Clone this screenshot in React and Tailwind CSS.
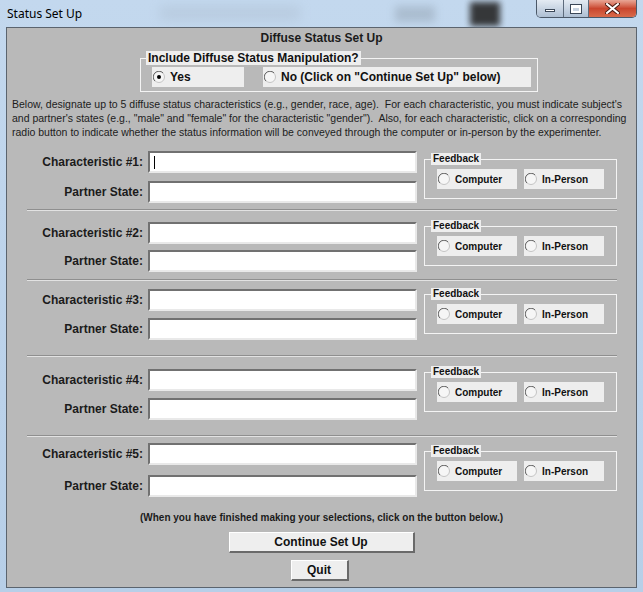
import React from 'react';

// per-group vertical offsets (GridBag spacing in the original is uneven)
const groups = [
  { n: 1, row1: 'mt-[12px]', row2: 'mt-[8px]', fb: 'mt-[14px]', sep: 'mt-[6px]', caret: true },
  { n: 2, row1: 'mt-[11px]', row2: 'mt-[6px]', fb: 'mt-[9px]', sep: 'mt-[7px]' },
  { n: 3, row1: 'mt-[8px]', row2: 'mt-[7px]', fb: 'mt-[7px]', sep: 'mt-[15px]' },
  { n: 4, row1: 'mt-[12px]', row2: 'mt-[7px]', fb: 'mt-[9px]', sep: 'mt-[15px]' },
  { n: 5, row1: 'mt-[6px]', row2: 'mt-[10px]', fb: 'mt-[8px]' },
];

function Radio({ checked }) {
  return (
    <svg width="12" height="12" viewBox="0 0 12 12" className="shrink-0">
      <circle cx="6" cy="6" r="5.5" fill="#f6f6f6" stroke="#c4c4c4" />
      <path d="M1.9 10.1 A5.5 5.5 0 0 1 10.1 1.9" fill="none" stroke="#6c6c6c" />
      {checked && <circle cx="6" cy="6" r="2" fill="#000" />}
    </svg>
  );
}

function TextField({ caret }) {
  return (
    <div className="w-[269px] h-[22px] bg-white border-t-2 border-l-2 border-t-[#717171] border-l-[#717171] border-b-2 border-r-2 border-b-[#e9e9e9] border-r-[#e9e9e9] flex items-center">
      {caret && <span className="ml-[4px] w-px h-[13px] bg-black" />}
    </div>
  );
}

function FieldRow({ label, caret, className }) {
  return (
    <div className={`flex items-center ${className}`}>
      <span className="w-[136px] text-right text-[12px] font-bold text-[#1b1b1b] leading-[14px]">{label}</span>
      <div className="ml-[5px]">
        <TextField caret={caret} />
      </div>
    </div>
  );
}

function Feedback({ className }) {
  return (
    <div className={`flex flex-col ml-[7px] w-[193px] ${className}`}>
      <span className="relative z-10 self-start ml-[7px] px-[2px] h-[12px] leading-[12px] bg-[#eeeeee] text-[10px] font-bold text-[#111]">
        Feedback
      </span>
      <div className="-mt-[6px] h-[40px] border border-[#f4f4f4] flex items-start pt-[9px] pl-[12px] gap-[7px]">
        <div className="w-[80px] h-[20px] bg-[#eeeeee] flex items-center pl-[1px] gap-[5px]">
          <Radio />
          <span className="text-[10px] font-bold text-[#111]">Computer</span>
        </div>
        <div className="w-[80px] h-[20px] bg-[#eeeeee] flex items-center pl-[1px] gap-[5px]">
          <Radio />
          <span className="text-[10px] font-bold text-[#111]">In-Person</span>
        </div>
      </div>
    </div>
  );
}

function WindowButtons() {
  return (
    <div className="ml-auto mr-[6px] flex h-[18px] rounded-b-[5px] border border-t-0 border-[#4b5868] overflow-hidden">
      <div className="w-[27px] h-full bg-gradient-to-b from-[#e4ebf3] to-[#aebfd3] border-r border-[#5d6b7c] flex items-center justify-center">
        <span className="mt-[4px] w-[10px] h-[3px] bg-white border border-[#3c4858]" />
      </div>
      <div className="w-[25px] h-full bg-gradient-to-b from-[#e4ebf3] to-[#aebfd3] border-r border-[#5d6b7c] flex items-center justify-center">
        <span className="w-[10px] h-[8px] bg-[#c8d3e0] border-2 border-t-[3px] border-white outline outline-1 outline-[#3c4858]" />
      </div>
      <div className="w-[47px] h-full bg-gradient-to-b from-[#e8a696] via-[#c9452e] to-[#d96a4a] flex items-center justify-center">
        <svg width="15" height="11" viewBox="0 0 15 11">
          <path d="M2 1 L13 10 M13 1 L2 10" stroke="#4a1a12" strokeWidth="4" strokeLinecap="square" />
          <path d="M2 1 L13 10 M13 1 L2 10" stroke="#ffffff" strokeWidth="2" strokeLinecap="square" />
        </svg>
      </div>
    </div>
  );
}

export default function App() {
  return (
    <div className="relative w-[643px] h-[592px] overflow-hidden bg-gradient-to-b from-[#c3d8ee] to-[#b7cfe8] flex flex-col font-['Liberation_Sans',Arial,sans-serif]">
      {/* blurred desktop showing through the aero frame */}
      <div className="absolute left-[470px] top-[2px] w-[30px] h-[24px] bg-[#262626] blur-[3px] opacity-90" />
      <div className="absolute left-[395px] top-[6px] w-[40px] h-[16px] bg-[#7f8c99] blur-[4px] opacity-35" />
      <div className="absolute left-[160px] top-[6px] w-[140px] h-[14px] bg-[#9aa7b5] blur-[6px] opacity-25" />

      <div className="relative h-[27px] flex items-start">
        <span className="ml-[7px] mt-[6px] text-[12px] leading-[15px] text-black font-['Noto_Sans',sans-serif]">Status Set Up</span>
        <WindowButtons />
      </div>

      <div className="relative mx-[6px] w-[631px] h-[561px] border border-[#5b646e] bg-[#b9b9b9] flex flex-col">
        <div className="mt-[3px] h-[14px] leading-[14px] text-center text-[12px] font-bold text-[#1b1b1b]">
          Diffuse Status Set Up
        </div>

        <div className="mt-[6px] ml-[133px] w-[398px] flex flex-col">
          <span className="relative z-10 self-start ml-[6px] px-[2px] h-[14px] leading-[14px] bg-[#eeeeee] text-[12px] font-bold text-[#111]">
            Include Diffuse Status Manipulation?
          </span>
          <div className="-mt-[7px] h-[34px] border border-[#f4f4f4] flex items-start pt-[8px] pl-[11px] gap-[19px]">
            <div className="w-[92px] h-[20px] bg-[#eeeeee] flex items-center pl-[1px] gap-[5px]">
              <Radio checked />
              <span className="text-[12px] font-bold text-[#111]">Yes</span>
            </div>
            <div className="w-[268px] h-[20px] bg-[#eeeeee] flex items-center pl-[1px] gap-[5px]">
              <Radio />
              <span className="text-[12px] font-bold text-[#111]">No (Click on "Continue Set Up" below)</span>
            </div>
          </div>
        </div>

        <div className="mt-[5px] ml-[5px] text-[10.5px] leading-[14px] text-[#1c1c1c] whitespace-pre">
          Below, designate up to 5 diffuse status characteristics (e.g., gender, race, age).  For each characteristic, you must indicate subject's
          <br />
          and partner's states (e.g., "male" and "female" for the characteristic "gender").  Also, for each characteristic, click on a corresponding
          <br />
          radio button to indicate whether the status information will be conveyed through the computer or in-person by the experimenter.
        </div>

        {groups.map((g) => (
          <div key={g.n} className="flex flex-col">
            <div className="flex items-start">
              <div className="flex flex-col">
                <FieldRow label={`Characteristic #${g.n}:`} caret={g.caret} className={g.row1} />
                <FieldRow label="Partner State:" className={g.row2} />
              </div>
              <Feedback className={g.fb} />
            </div>
            {g.sep && <div className={`ml-[20px] w-[590px] border-t border-t-[#8f8f8f] border-b border-b-[#e2e2e2] ${g.sep}`} />}
          </div>
        ))}

        <div className="mt-[15px] h-[12px] leading-[12px] text-center text-[10px] font-bold text-[#1b1b1b]">
          (When you have finished making your selections, click on the button below.)
        </div>

        <button className="mt-[8px] self-center w-[186px] h-[21px] bg-[#eeeeee] border-t border-l border-white border-b-2 border-r-2 border-b-[#6a6a6a] border-r-[#6a6a6a] text-[12px] font-bold text-[#111]">
          Continue Set Up
        </button>
        <button className="mt-[7px] self-center -translate-x-[2px] w-[58px] h-[21px] bg-[#eeeeee] border-t border-l border-white border-b-2 border-r-2 border-b-[#6a6a6a] border-r-[#6a6a6a] text-[12px] font-bold text-[#111]">
          Quit
        </button>
      </div>
    </div>
  );
}
